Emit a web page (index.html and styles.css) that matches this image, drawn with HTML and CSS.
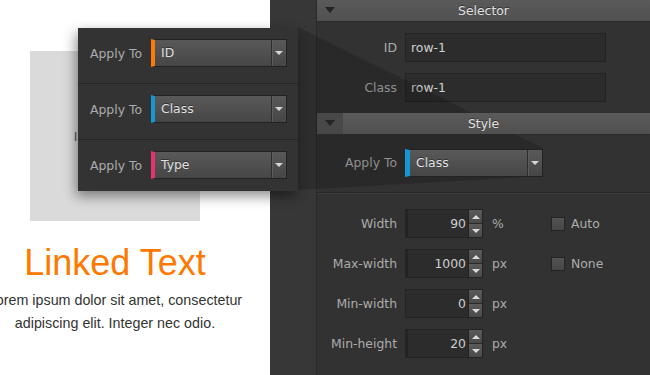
FILE: index.html
```html
<!DOCTYPE html>
<html lang="en">
<head>
  <meta charset="UTF-8">
  <title>Selector Styles</title>
  <link rel="stylesheet" href="styles.css">
</head>
<body>

  <div class="canvas">
    <div class="canvas-content">
      <div class="placeholder"><span>Image content</span></div>
      <h1 class="linked">Linked Text</h1>
      <p class="copy">Lorem ipsum dolor sit amet, consectetur adipiscing elit. Integer nec odio.</p>
    </div>
  </div>

  <div class="panel">
    <div class="panel-strip"></div>
    <div class="panel-main">

      <div class="section-head">
        <span class="toggle"></span>
        <span class="section-title">Selector</span>
      </div>
      <div class="section-body">
        <div class="field">
          <label class="field-label">ID</label>
          <div class="text-input">row-1</div>
        </div>
        <div class="field">
          <label class="field-label">Class</label>
          <div class="text-input">row-1</div>
        </div>
      </div>

      <div class="section-head">
        <span class="toggle toggle-box"></span>
        <span class="section-title">Style</span>
      </div>
      <div class="section-body apply-body">
        <div class="field">
          <label class="field-label">Apply To</label>
          <div class="select select-wide is-class">
            <span class="select-value">Class</span>
            <span class="select-arrow"></span>
          </div>
        </div>
      </div>

      <div class="section-body size-body">
        <div class="field">
          <label class="field-label">Width</label>
          <div class="num is-id">
            <span class="num-value">90</span>
            <span class="spin"><span class="spin-up"></span><span class="spin-down"></span></span>
          </div>
          <span class="unit">%</span>
          <span class="check"><span class="check-box"></span>Auto</span>
        </div>
        <div class="field">
          <label class="field-label">Max-width</label>
          <div class="num is-type">
            <span class="num-value">1000</span>
            <span class="spin"><span class="spin-up"></span><span class="spin-down"></span></span>
          </div>
          <span class="unit">px</span>
          <span class="check"><span class="check-box"></span>None</span>
        </div>
        <div class="field">
          <label class="field-label">Min-width</label>
          <div class="num">
            <span class="num-value">0</span>
            <span class="spin"><span class="spin-up"></span><span class="spin-down"></span></span>
          </div>
          <span class="unit">px</span>
        </div>
        <div class="field">
          <label class="field-label">Min-height</label>
          <div class="num is-class">
            <span class="num-value">20</span>
            <span class="spin"><span class="spin-up"></span><span class="spin-down"></span></span>
          </div>
          <span class="unit">px</span>
        </div>
      </div>

    </div>
  </div>

  <!-- callout joining the popover to the Apply To menu -->
  <svg class="callout" width="650" height="375" viewBox="0 0 650 375">
    <polygon points="298,27 543,148 543,176 298,190" fill="rgba(0,0,0,0.17)"/>
  </svg>

  <div class="popover">
    <div class="pop-row">
      <span class="pop-label">Apply To</span>
      <div class="select is-id">
        <span class="select-value">ID</span>
        <span class="select-arrow"></span>
      </div>
    </div>
    <div class="pop-row">
      <span class="pop-label">Apply To</span>
      <div class="select is-class">
        <span class="select-value">Class</span>
        <span class="select-arrow"></span>
      </div>
    </div>
    <div class="pop-row">
      <span class="pop-label">Apply To</span>
      <div class="select is-type">
        <span class="select-value">Type</span>
        <span class="select-arrow"></span>
      </div>
    </div>
  </div>

</body>
</html>
```

FILE: styles.css
```css
html {
    box-sizing: border-box;
  }

  *, *:before, *:after {
    box-sizing: inherit;
  }

  body {
    margin: 0;
    width: 650px;
    height: 375px;
    overflow: hidden;
    display: flex;
    position: relative;
    background: #fff;
    font-family: "DejaVu Sans", Verdana, sans-serif;
    font-size: 12.4px;
  }

  /* left page preview */
  .canvas {
    width: 270px;
    flex: none;
    background: #fff;
    padding-top: 51px;
  }

  .canvas-content {
    width: 170px;
    margin-left: 30px;
  }

  .placeholder {
    height: 170px;
    background: #dadada;
    display: flex;
    align-items: center;
    justify-content: center;
    font-family: "Liberation Sans", Arial, sans-serif;
    font-size: 13px;
    color: #555;
  }

  .linked {
    margin: 22px -40px 0;
    text-align: center;
    font-family: "Liberation Sans", Arial, sans-serif;
    font-weight: normal;
    font-size: 36px;
    line-height: 40px;
    color: #ff7800;
  }

  .copy {
    margin: 6px -55px 0;
    text-align: center;
    font-family: "Liberation Sans", Arial, sans-serif;
    font-size: 14.3px;
    line-height: 23px;
    color: #333;
  }

  /* right inspector panel */
  .panel {
    flex: 1;
    display: flex;
    background: #323232;
  }

  .panel-strip {
    width: 47px;
    flex: none;
    background: #373737;
    border-right: 1px solid #2a2a2a;
  }

  .panel-main {
    flex: 1;
  }

  .section-head {
    position: relative;
    z-index: 3;
    height: 22px;
    display: flex;
    align-items: center;
    background: linear-gradient(#5a5a5a, #505050);
    border-bottom: 1px solid #2a2a2a;
    color: #e2e2e2;
  }

  .toggle {
    width: 26px;
    height: 100%;
    flex: none;
    display: flex;
    align-items: center;
    justify-content: center;
  }

  .toggle:before {
    content: '';
    border-left: 5px solid transparent;
    border-right: 5px solid transparent;
    border-top: 6px solid #232323;
    margin-top: -2px;
  }

  .toggle-box {
    background: #484848;
  }

  .section-title {
    flex: 1;
    text-align: center;
    margin-right: 26px;
    text-shadow: 0 -1px 0 #333;
  }

  .section-body {
    padding: 11px 0;
    display: flex;
    flex-direction: column;
    gap: 11px;
  }

  .apply-body {
    padding: 13px 0 15px;
    border-bottom: 1px solid #272727;
    box-shadow: 0 1px 0 #3a3a3a;
  }

  .size-body {
    padding-top: 16px;
  }

  .field {
    display: flex;
    align-items: center;
    height: 29px;
  }

  .field-label {
    width: 80px;
    margin-right: 8px;
    text-align: right;
    color: #acacac;
  }

  .text-input {
    width: 201px;
    height: 29px;
    padding-left: 5px;
    line-height: 27px;
    background: #2c2c2c;
    border: 1px solid #232323;
    color: #d0d0d0;
  }

  /* dropdowns */
  .select {
    position: relative;
    z-index: 3;
    display: flex;
    width: 136px;
    height: 28px;
    border: 1px solid #222;
    border-left: 4px solid #888;
    background: linear-gradient(#595959, #464646);
    color: #e0e0e0;
  }

  .select-wide {
    width: 138px;
    border-left-width: 5px;
  }

  .select-value {
    flex: 1;
    padding-left: 6px;
    line-height: 26px;
    text-shadow: 0 -1px 0 #333;
  }

  .select-arrow {
    width: 15px;
    border-left: 1px solid #2e2e2e;
    box-shadow: inset 1px 0 0 #5c5c5c;
    display: flex;
    align-items: center;
    justify-content: center;
  }

  .select-arrow:before {
    content: '';
    border-left: 4px solid transparent;
    border-right: 4px solid transparent;
    border-top: 4px solid #d6d6d6;
  }

  .is-id { border-left-color: #ff7a00; }
  .is-class { border-left-color: #1596d6; }
  .is-type { border-left-color: #e3346c; }

  /* number steppers */
  .num {
    display: flex;
    width: 78px;
    height: 29px;
    background: #2c2c2c;
    border: 1px solid #232323;
    color: #cfcfcf;
  }

  .num.is-id, .num.is-class, .num.is-type {
    border-left-width: 3px;
  }

  .num-value {
    flex: 1;
    text-align: right;
    padding-right: 2px;
    line-height: 27px;
  }

  .spin {
    width: 14px;
    display: flex;
    flex-direction: column;
    border-left: 1px solid #232323;
  }

  .spin-up, .spin-down {
    flex: 1;
    display: flex;
    align-items: center;
    justify-content: center;
    background: linear-gradient(#5a5a5a, #4a4a4a);
  }

  .spin-down {
    border-top: 1px solid #2a2a2a;
  }

  .spin-up:before {
    content: '';
    border-left: 4px solid transparent;
    border-right: 4px solid transparent;
    border-bottom: 4px solid #dcdcdc;
  }

  .spin-down:before {
    content: '';
    border-left: 4px solid transparent;
    border-right: 4px solid transparent;
    border-top: 4px solid #dcdcdc;
  }

  .unit {
    width: 68px;
    padding-left: 9px;
    color: #acacac;
  }

  .check {
    display: flex;
    align-items: center;
    gap: 6px;
    color: #acacac;
  }

  .check-box {
    width: 14px;
    height: 14px;
    border: 1px solid #242424;
    background: linear-gradient(#545454, #474747);
  }

  /* callout + popover */
  .callout {
    position: absolute;
    left: 0;
    top: 0;
    z-index: 2;
    pointer-events: none;
  }

  .popover {
    position: absolute;
    left: 78px;
    top: 28px;
    z-index: 4;
    width: 220px;
    background: #333;
    box-shadow: -2px 5px 12px rgba(0,0,0,0.45);
  }

  .pop-row {
    display: flex;
    align-items: center;
    padding: 11px 11px 16px 12px;
    border-bottom: 1px solid #262626;
  }

  .pop-row:last-child {
    border-bottom: none;
    padding-bottom: 12px;
  }

  .pop-label {
    width: 61px;
    color: #acacac;
  }
```
